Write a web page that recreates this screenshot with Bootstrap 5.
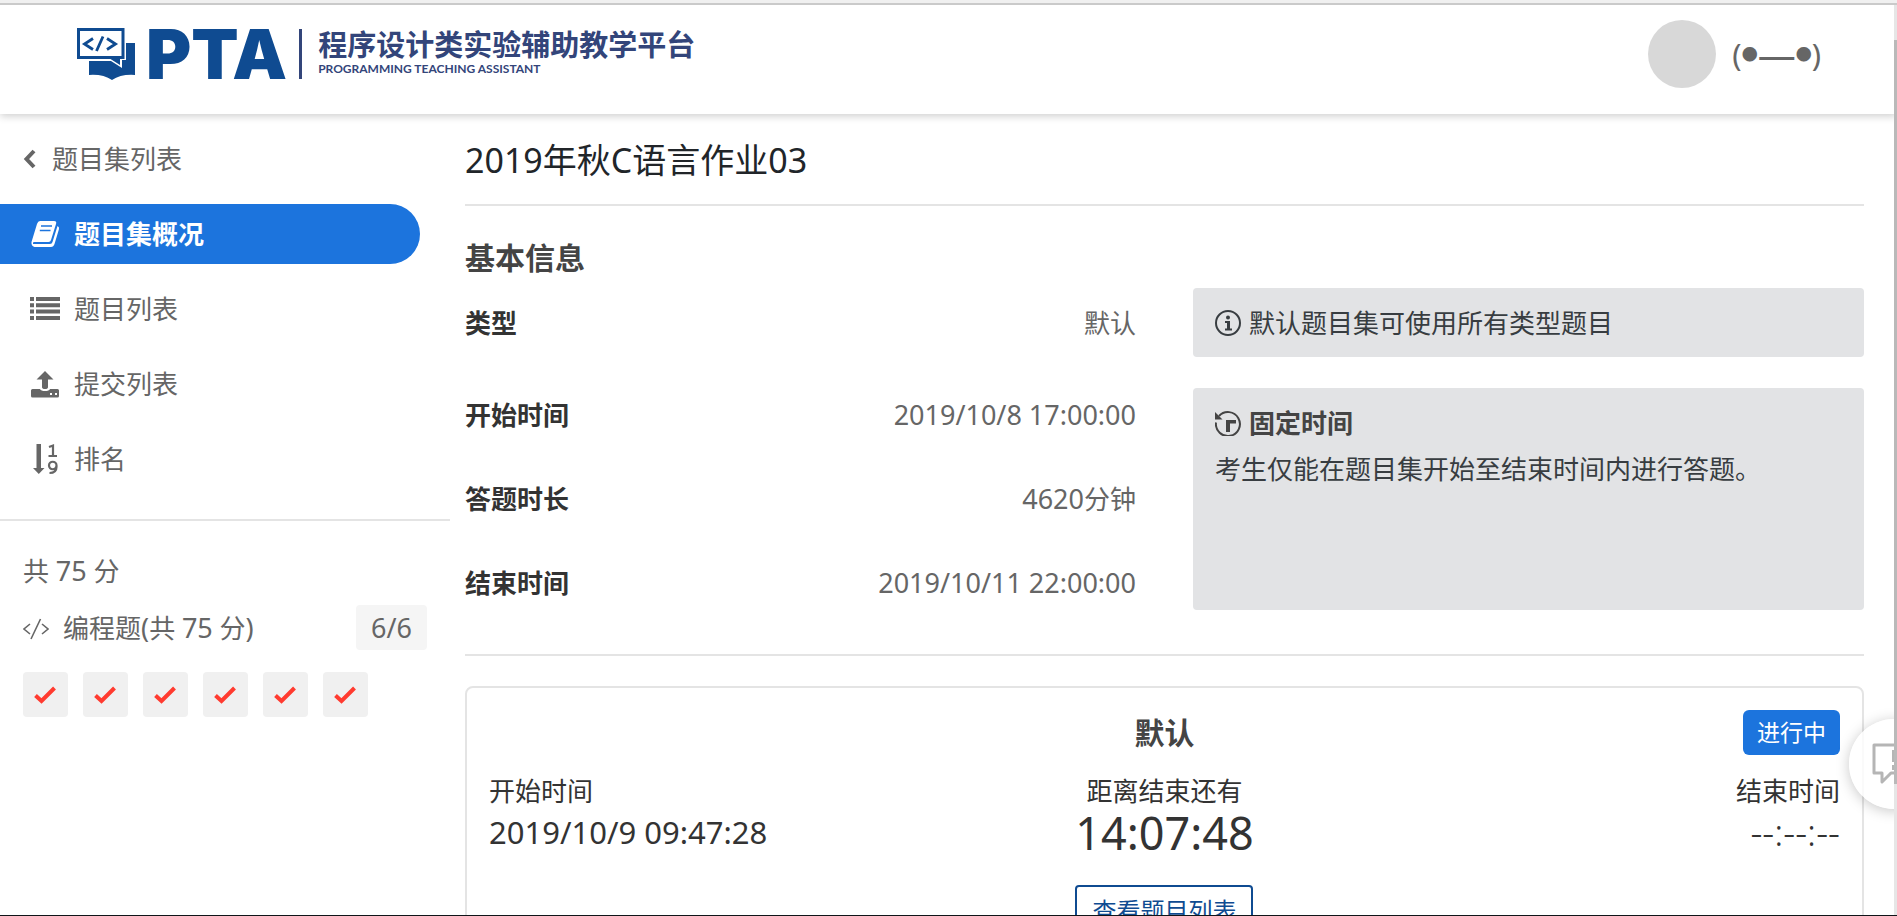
<!DOCTYPE html>
<html lang="zh-CN">
<head>
<meta charset="utf-8">
<meta name="viewport" content="width=device-width, initial-scale=1">
<title>2019年秋C语言作业03 - PTA</title>
<link href="https://cdn.jsdelivr.net/npm/bootstrap@5.3.0/dist/css/bootstrap.min.css" rel="stylesheet">
<style>
  body { height: 100vh; overflow: hidden; font-family: "Noto Sans", "Noto Sans CJK SC", sans-serif; font-size: 26px; line-height: 40px; color: #333; background: #fff; border-top: 3px solid #f0f0f0; border-bottom: 1px solid #101418; }
  hr { margin: 0; border-top: 2px solid #e4e4e4; opacity: 1; }
  .latin { font-size: 27px; line-height: 40px; }
  .top-bar { height: 111px; padding: 0 76px; border-top: 2px solid #cacaca; box-shadow: 0 2px 8px rgba(0,0,0,.2); z-index: 2; }
  .brand { gap: 10px; color: #0f4b91; margin-bottom: 12px; }
  .brand-word { font-family: Inter, sans-serif; font-weight: 900; font-size: 69px; line-height: 52px; }
  .brand-text { border-left: 3px solid #33457a; padding-left: 16px; height: 50px; color: #33457a; margin-left: 2px; }
  .brand-zh { font-size: 29px; line-height: 32px; font-weight: 700; }
  .brand-en { font-family: Lato, sans-serif; font-size: 12px; line-height: 16px; font-weight: 700; }
  .user-link { color: #666; gap: 16px; margin-bottom: 12px; }
  .avatar { width: 68px; height: 68px; background: #d8d8d8; }
  .face { font-size: 31px; }
  .eye { font-size: 16px; }
  .mouth { font-size: 38px; }
  .side { flex: 0 0 450px; padding-top: 15px; color: #666; }
  .side .nav { gap: 15px; }
  .side .nav-link { height: 60px; padding: 0 30px; gap: 14px; color: #666; }
  .side .nav-link.back { padding: 0 23px; gap: 16px; }
  .side .nav-link.active { background: #1c74dd; color: #fff; font-weight: 700; margin-right: 30px; border-radius: 0 30px 30px 0; }
  .side-hr { margin-top: 30px; }
  .score { padding: 30px 23px 0; }
  .score-row { margin-top: 14px; height: 45px; gap: 14px; }
  .count { background: #f5f5f5; border-radius: 4px; padding: 0 15px; }
  .count.latin { line-height: 45px; }
  .tiles { margin-top: 22px; gap: 15px; }
  .tile { width: 45px; height: 45px; background: #f0f0f0; border-radius: 4px; }
  .content { padding: 21px 33px 0 15px; }
  .page-title { font-size: 34px; line-height: 50px; color: #212529; margin: 0 0 19px; font-weight: 400; }
  .section-title { font-size: 30px; line-height: 40px; font-weight: 700; color: #444; margin: 32px 0 10px; }
  .info { --bs-gutter-x: 57px; }
  .info dd { color: #666; }
  .note { background: #e2e3e5; border-radius: 4px; color: #383d41; padding: 15px 22px; }
  .note svg { margin-right: 8px; }
  .note-head { color: #444; margin-bottom: 6px; }
  .type-row { height: 69px; margin-bottom: 31px; }
  .times { gap: 44px; padding: 7px 0; }
  .info-end { margin: 44px 0 30px; }
  .exam { border: 2px solid #e4e4e4; border-radius: 8px; padding: 22px; height: 400px; }
  .exam-title { font-size: 30px; font-weight: 700; color: #444; }
  .state { background: #1c74dd; border-radius: 6px; font-size: 23px; line-height: 45px; padding: 0 14px; font-weight: 400; }
  .exam-times { margin-top: 16px; }
  .clock { font-size: 31px; line-height: 42px; }
  .countdown { font-size: 45px; line-height: 44px; }
  .blank { font-size: 37px; font-weight: 300; }
  .btn-view { border: 2px solid #0f4b91; color: #0f4b91; border-radius: 4px; font-size: 24px; line-height: 40px; padding: 4px 15px; margin-top: 30px; }
  .chat { right: -42px; top: 716px; width: 90px; height: 90px; background: rgba(255,255,255,.8); box-shadow: 0 2px 14px rgba(0,0,0,.22); z-index: 3; padding: 0 0 0 22px; }
  .scroll-track { right: 0; top: 2px; bottom: 0; width: 3px; background: #e6e6e6; z-index: 4; padding-top: 35px; }
  .scroll-thumb { height: 85%; background: #b9b9b9; }
</style>
</head>
<body class="d-flex flex-column position-relative">
<header class="top-bar d-flex align-items-center justify-content-between flex-shrink-0 bg-white position-relative">
  <a href="#" class="brand d-flex align-items-center text-decoration-none">
    <svg width="60" height="54" viewBox="0 0 60 54" aria-label="PTA">
      <path d="M13 32H59V48Q45 47 36 53Q27 47 13 48ZM50 16H59V34H50Z" fill="#0f4b91"/>
      <path d="M0 0H50V33H46V41L35 34H0Z" fill="#fff"/>
      <path d="M1 1H48.500V32H44V38L34.500 32H1Z" fill="#0f4b91"/><path d="M4 4H45.500V29H4Z" fill="#fff"/>
      <path d="M17 11.500L8.500 17L17 22.500M31 11.500L39.500 17L31 22.500M27 9.500L20.500 24" fill="none" stroke="#0f4b91" stroke-width="2.800"/>
    </svg>
    <span class="brand-word">PTA</span>
    <span class="brand-text d-flex flex-column justify-content-start">
      <span class="brand-zh">程序设计类实验辅助教学平台</span>
      <span class="brand-en">PROGRAMMING TEACHING ASSISTANT</span>
    </span>
  </a>
  <a href="#" class="user-link d-flex align-items-center text-decoration-none">
    <span class="avatar rounded-circle"></span>
    <span class="face d-flex align-items-center"><span>(</span><span class="eye">●</span><span class="mouth">—</span><span class="eye">●</span><span>)</span></span>
  </a>
</header>

<div class="d-flex flex-grow-1 overflow-hidden">
  <aside class="side">
    <nav class="nav flex-column">
      <a class="nav-link back d-flex align-items-center" href="#">
        <svg width="13" height="20" viewBox="0 0 13 20"><path d="M11 2L3.500 10L11 18" fill="none" stroke="#666" stroke-width="4"/></svg>题目集列表</a>
      <a class="nav-link active d-flex align-items-center" href="#">
        <svg width="30" height="28" viewBox="0 0 30 28"><path d="M10 1H24Q27 1 26 4L21 20Q20.500 22 18.500 22H4Q2.500 22 3 24H20Q22 24 22.500 22L27.500 6Q29.500 7 29 9L24.500 24Q23.500 27 21 27H4.500Q1 26 1.500 22L7 4Q8 1 10 1Z" fill="#fff"/><path d="M11 6H22M9.800 10.500H20.500" stroke="#1c74dd" stroke-width="1.600"/></svg>题目集概况</a>
      <a class="nav-link d-flex align-items-center" href="#">
        <svg width="30" height="26" viewBox="0 0 30 26" fill="#666"><path d="M0 1h4v4H0zM6 1h24v4H6zM0 7.300h4v4H0zM6 7.300h24v4H6zM0 13.600h4v4H0zM6 13.600h24v4H6zM0 20h4v4H0zM6 20h24v4H6z"/></svg>题目列表</a>
      <a class="nav-link d-flex align-items-center" href="#">
        <svg width="30" height="28" viewBox="0 0 30 28" fill="#666"><path d="M15 1L23.500 9.500H18V17Q18 19 15 19T12 17V9.500H6.500Z"/><path d="M2.500 19H10Q11 21 15 21T20 19H27.500Q29 19 29 20.500V26Q29 27.500 27.500 27.500H2.500Q1 27.500 1 26V20.500Q1 19 2.500 19Z"/><path d="M20 23h2v2h-2zM25 23h2v2h-2z" fill="#fff"/></svg>提交列表</a>
      <a class="nav-link d-flex align-items-center" href="#">
        <svg width="30" height="32" viewBox="0 0 30 32"><path d="M6.500 1H11V25H14.500L8.800 31L3 25H6.500Z" fill="#666"/><path d="M19 4L23 2.500V13M18.500 13H27M26.500 22.500A3.700 3.700 0 1 1 19 22.500A3.700 3.700 0 0 1 26.500 22.500V24Q26.500 30 19.500 30" fill="none" stroke="#666" stroke-width="2.200"/></svg>排名</a>
    </nav>
    <hr class="side-hr">
    <section class="score">
      <div>共 <span class="latin">75</span> 分</div>
      <div class="score-row d-flex align-items-center">
        <svg width="26" height="24" viewBox="0 0 26 24"><path d="M7 8L1 13L7 18M19 8L25 13L19 18M17.500 3L8 23" fill="none" stroke="#666" stroke-width="1.600"/></svg>
        <span>编程题<span class="latin">(</span>共 <span class="latin">75</span> 分<span class="latin">)</span></span>
        <span class="count latin ms-auto">6/6</span>
      </div>
      <div class="tiles d-flex" id="tiles"></div>
    </section>
  </aside>

  <main class="content flex-grow-1">
    <h1 class="page-title">2019年秋C语言作业03</h1>
    <hr>
    <h2 class="section-title">基本信息</h2>
    <div class="row info">
      <dl class="col-6 mb-0">
        <div class="type-row d-flex justify-content-between align-items-center"><dt>类型</dt><dd class="mb-0">默认</dd></div>
        <div class="times d-flex flex-column">
          <div class="d-flex justify-content-between"><dt>开始时间</dt><dd class="latin mb-0">2019/10/8 17:00:00</dd></div>
          <div class="d-flex justify-content-between"><dt>答题时长</dt><dd class="mb-0"><span class="latin">4620</span>分钟</dd></div>
          <div class="d-flex justify-content-between"><dt>结束时间</dt><dd class="latin mb-0">2019/10/11 22:00:00</dd></div>
        </div>
      </dl>
      <div class="col-6 d-flex flex-column">
        <div class="note type-row d-flex align-items-center">
          <svg width="26" height="26" viewBox="0 0 26 26"><circle cx="13" cy="13" r="12" fill="none" stroke="#383d41" stroke-width="2"/><circle cx="13" cy="7.500" r="2" fill="#383d41"/><path d="M10 11H15V18.500H17V20.500H10V18.500H12V13H10Z" fill="#383d41"/></svg>默认题目集可使用所有类型题目</div>
        <div class="note flex-grow-1">
          <div class="note-head d-flex align-items-center fw-bold">
            <svg width="26" height="26" viewBox="0 0 26 26"><path d="M4 6A12 12 0 1 1 1 12.500" fill="none" stroke="#444" stroke-width="2"/><path d="M0 2L7.500 9.500H0Z" fill="#444"/><path d="M11 10H21V13.500H15V22H11Z" fill="#444"/></svg>固定时间</div>
          <div>考生仅能在题目集开始至结束时间内进行答题。</div>
        </div>
      </div>
    </div>
    <hr class="info-end">
    <section class="exam">
      <div class="row align-items-center g-0">
        <div class="col-4 offset-4 exam-title text-center">默认</div>
        <div class="col-4 d-flex justify-content-end"><span class="badge state">进行中</span></div>
      </div>
      <div class="row g-0 exam-times">
        <div class="col-4">开始时间<div class="clock">2019/10/9 09:47:28</div></div>
        <div class="col-4 text-center">距离结束还有<div class="countdown">14:07:48</div>
          <button type="button" class="btn btn-view">查看题目列表</button></div>
        <div class="col-4 text-end">结束时间<div class="clock blank">--:--:--</div></div>
      </div>
    </section>
  </main>
</div>

<button type="button" class="chat btn rounded-circle border-0 position-absolute d-flex align-items-center" aria-label="反馈">
  <svg width="44" height="44" viewBox="0 0 44 44"><path d="M3 3H41V31H20L11 40V31H3Z" fill="none" stroke="#b5b5b5" stroke-width="3" stroke-linejoin="round"/><path d="M21 8h4v12h-4zM21 23h4v5h-4z" fill="#b5b5b5"/></svg>
</button>
<div class="scroll-track position-absolute"><div class="scroll-thumb"></div></div>

<script src="https://cdn.jsdelivr.net/npm/bootstrap@5.3.0/dist/js/bootstrap.bundle.min.js"></script>
<script>
  document.getElementById('tiles').innerHTML = Array.from({ length: 6 }, (_, i) =>
    `<a href="#" class="tile d-flex align-items-center justify-content-center" aria-label="${i + 1}">
      <svg width="24" height="20" viewBox="0 0 24 20"><path d="M1.500 10.500L7.500 16L20.500 3" fill="none" stroke="#ff3b30" stroke-width="4"/></svg></a>`).join('');
</script>
</body>
</html>
